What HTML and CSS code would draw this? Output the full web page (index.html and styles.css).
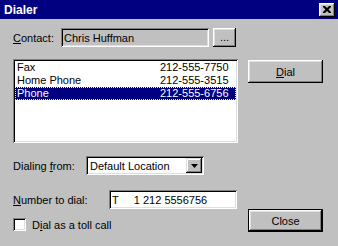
FILE: index.html
```html
<!DOCTYPE html>
<html>
<head>
<meta charset="utf-8">
<link rel="stylesheet" href="styles.css">
</head>
<body>
<div class="window">
  <div class="titlebar">
    <span class="title">Dialer</span>
    <div class="tb-close">
      <svg width="8" height="7" viewBox="0 0 8 7"><path d="M0 0h2l2 2 2-2h2v1l-2.5 2.5L8 6v1H6L4 5 2 7H0V6l2.5-2.5L0 1z" fill="#000"/></svg>
    </div>
  </div>
  <div class="client">
    <div class="left">
      <div class="row">
        <span class="lbl lbl-contact"><u>C</u>ontact:</span>
        <div class="field field-ro">Chris Huffman</div>
        <div class="btn btn-browse">...</div>
      </div>
      <div class="listbox">
        <div class="item"><span>Fax</span><span>212-555-7750</span></div>
        <div class="item"><span>Home Phone</span><span>212-555-3515</span></div>
        <div class="item item-sel"><span>Phone</span><span>212-555-6756</span></div>
      </div>
      <div class="row row-from">
        <span class="lbl lbl-from">Dialing <u>f</u>rom:</span>
        <div class="field combo">
          <span class="combo-text">Default Location</span>
          <div class="combo-btn"><svg width="7" height="4" viewBox="0 0 7 4"><path d="M0 0h7L3.5 4z" fill="#000"/></svg></div>
        </div>
      </div>
      <div class="row row-number">
        <span class="lbl lbl-number"><u>N</u>umber to dial:</span>
        <div class="field field-number">T     1 212 5556756</div>
      </div>
      <div class="row row-check">
        <div class="checkbox"></div>
        <span class="check-lbl">D<u>i</u>al as a toll call</span>
      </div>
    </div>
    <div class="right">
      <div class="btn btn-dial"><u>D</u>ial</div>
      <div class="btn btn-default btn-close">Close</div>
    </div>
  </div>
</div>
</body>
</html>
```

FILE: styles.css
```css
html, body {
  margin: 0;
  padding: 0;
}
body {
  width: 338px;
  height: 246px;
  overflow: hidden;
  background: #c0c0c0;
  font-family: "Liberation Sans", Arial, sans-serif;
  font-size: 11px;
  color: #000;
}
u {
  text-decoration: underline;
  text-underline-offset: 1px;
}
.window {
  width: 338px;
  height: 246px;
  background: #c0c0c0;
}
.titlebar {
  height: 19px;
  box-sizing: border-box;
  background: #000080;
  display: flex;
  align-items: center;
  justify-content: space-between;
  padding: 0 3px 0 4px;
}
.title {
  color: #fff;
  font-weight: bold;
  font-size: 12px;
}
.tb-close {
  width: 16px;
  height: 14px;
  background: #c0c0c0;
  box-shadow: inset -1px -1px #000, inset 1px 1px #fff, inset -2px -2px #808080, inset 2px 2px #dfdfdf;
  display: flex;
  align-items: center;
  justify-content: center;
}
.client {
  display: flex;
  padding: 9px 0 0 13px;
  gap: 10px;
}
.left {
  width: 225px;
  display: flex;
  flex-direction: column;
}
.right {
  width: 75px;
  display: flex;
  flex-direction: column;
}
.row {
  display: flex;
  align-items: center;
  height: 19px;
}
.lbl {
  flex: none;
}
.lbl-contact { width: 48px; }
.lbl-from { width: 73px; }
.lbl-number { width: 96px; }
.field {
  box-sizing: border-box;
  height: 19px;
  background: #fff;
  box-shadow: inset 1px 1px #808080, inset -1px -1px #fff, inset 2px 2px #000, inset -2px -2px #dfdfdf;
  display: flex;
  align-items: center;
  padding: 0 2px 0 3px;
  white-space: pre;
}
.field-ro {
  width: 148px;
  background: #c0c0c0;
}
.btn {
  box-sizing: border-box;
  background: #c0c0c0;
  box-shadow: inset -1px -1px #000, inset 1px 1px #fff, inset -2px -2px #808080, inset 2px 2px #dfdfdf;
  display: flex;
  align-items: center;
  justify-content: center;
}
.btn-browse {
  width: 23px;
  height: 19px;
  margin-left: 4px;
  padding-bottom: 2px;
}
.listbox {
  box-sizing: border-box;
  margin-top: 12px;
  height: 84px;
  background: #fff;
  padding: 2px;
  box-shadow: inset 1px 1px #808080, inset -1px -1px #fff, inset 2px 2px #000, inset -2px -2px #dfdfdf;
}
.item {
  display: grid;
  grid-template-columns: 143px 1fr;
  height: 13px;
  line-height: 13px;
  padding-left: 2px;
}
.item-sel {
  background: #000080;
  color: #fff;
  outline: 1px dotted #ffff60;
  outline-offset: -1px;
}
.row-from {
  margin-top: 13px;
}
.combo {
  width: 118px;
  padding: 2px 2px 2px 4px;
  justify-content: space-between;
}
.combo-btn {
  width: 16px;
  height: 15px;
  background: #c0c0c0;
  box-shadow: inset -1px -1px #000, inset 1px 1px #dfdfdf, inset -2px -2px #808080, inset 2px 2px #fff;
  display: flex;
  align-items: center;
  justify-content: center;
}
.row-number {
  margin-top: 15px;
}
.field-number {
  width: 128px;
}
.row-check {
  margin-top: 9px;
  height: 13px;
}
.checkbox {
  width: 13px;
  height: 13px;
  box-sizing: border-box;
  background: #fff;
  box-shadow: inset 1px 1px #808080, inset -1px -1px #fff, inset 2px 2px #000, inset -2px -2px #dfdfdf;
}
.check-lbl {
  margin-left: 6px;
}
.btn-dial {
  margin-top: 32px;
  width: 75px;
  height: 23px;
}
.btn-close {
  margin-top: 126px;
  width: 75px;
  height: 23px;
}
.btn-default {
  box-shadow: inset 0 0 0 1px #000, inset -2px -2px #000, inset 2px 2px #fff, inset -3px -3px #808080, inset 3px 3px #dfdfdf;
}
```
